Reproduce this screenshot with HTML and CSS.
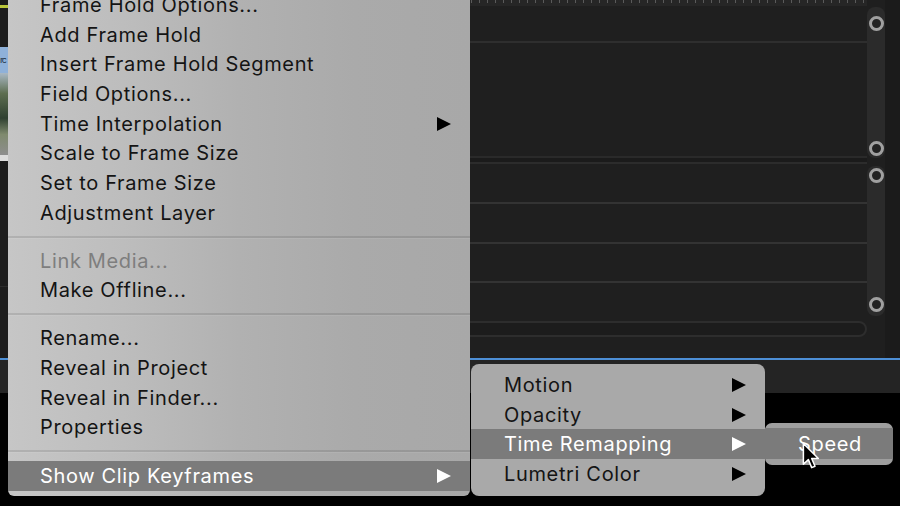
FILE: index.html
```html
<!DOCTYPE html>
<html>
<head>
<meta charset="utf-8">
<link rel="stylesheet" href="styles.css">
</head>
<body>
<div class="screen">
  <div class="timeline">
    <div class="strip">
      <div class="strip-yellow"></div>
      <div class="strip-gap1"></div>
      <div class="strip-clip">rc</div>
      <div class="strip-thumb"></div>
      <div class="strip-light"></div>
      <div class="strip-rest"></div>
    </div>
    <div class="tracks">
      <div class="ticks"></div>
      <div class="track t1"></div>
      <div class="track t2"></div>
      <div class="divider"></div>
      <div class="track t3"></div>
      <div class="track t4"></div>
      <div class="track t5"></div>
      <div class="track t6"></div>
      <div class="hscroll"></div>
      <div class="filler"></div>
    </div>
    <div class="vscroll">
      <div class="vtrack v1"><span class="knob"></span><span class="knob"></span></div>
      <div class="vtrack v2"><span class="knob"></span><span class="knob"></span></div>
    </div>
    <div class="edge"></div>
  </div>
  <div class="blue-line"></div>
  <div class="bottom-bar"></div>
  <div class="black"></div>

  <div class="menu main-menu">
    <div class="item">Frame Hold Options...</div>
    <div class="item">Add Frame Hold</div>
    <div class="item">Insert Frame Hold Segment</div>
    <div class="item">Field Options...</div>
    <div class="item has-sub">Time Interpolation<span class="arrow"></span></div>
    <div class="item">Scale to Frame Size</div>
    <div class="item">Set to Frame Size</div>
    <div class="item">Adjustment Layer</div>
    <div class="sep"></div>
    <div class="item disabled">Link Media...</div>
    <div class="item">Make Offline...</div>
    <div class="sep"></div>
    <div class="item">Rename...</div>
    <div class="item">Reveal in Project</div>
    <div class="item">Reveal in Finder...</div>
    <div class="item">Properties</div>
    <div class="sep"></div>
    <div class="item has-sub active">Show Clip Keyframes<span class="arrow"></span></div>
  </div>

  <div class="menu sub-menu">
    <div class="item has-sub">Motion<span class="arrow"></span></div>
    <div class="item has-sub">Opacity<span class="arrow"></span></div>
    <div class="item has-sub active">Time Remapping<span class="arrow"></span></div>
    <div class="item has-sub">Lumetri Color<span class="arrow"></span></div>
  </div>

  <div class="menu sub-menu2">
    <div class="item active">Speed</div>
  </div>

  <svg class="cursor" width="18" height="28" viewBox="0 0 13 20">
    <path d="M1 1 L1 16 L4.6 12.6 L7 18.4 L9.4 17.4 L7 11.8 L11.8 11.8 Z" fill="#000" stroke="#fff" stroke-width="1.1" stroke-linejoin="round"/>
  </svg>
</div>
</body>
</html>
```
FILE: styles.css
```css
* { box-sizing: border-box; }
html, body { margin: 0; padding: 0; }
body {
  width: 900px;
  height: 506px;
  overflow: hidden;
  background: #000;
  font-family: Inter, "Noto Sans", "Liberation Sans", sans-serif;
}
.screen {
  position: relative;
  width: 900px;
  height: 506px;
  display: flex;
  flex-direction: column;
}
.timeline {
  height: 358px;
  display: flex;
  background: #1f1f1f;
}
.strip {
  width: 8px;
  display: flex;
  flex-direction: column;
  background: #1b1b1b;
}
.strip-yellow { height: 10px; border-top: 5px solid #1b1b1b; background: #b9c53a; border-bottom: 2px solid #1b1b1b; }
.strip-gap1 { height: 37px; background: #1c1c1c; }
.strip-clip {
  height: 26px;
  background: #8fb1d9;
  color: #234;
  font-size: 9px;
  letter-spacing: -1.5px;
  line-height: 26px;
  overflow: hidden;
}
.strip-thumb {
  height: 82px;
  background: linear-gradient(#a9b8c4 0%, #5d6e50 25%, #2f4030 55%, #7f8a6e 75%, #8e8e8e 100%);
}
.strip-light { height: 6px; background: #dcdcdc; }
.strip-rest {
  flex: 1;
  background: #1c1c1c;
  border-top: 125px solid #1c1c1c;
  box-shadow: inset 0 1px 0 #2b2b2b;
}
.tracks {
  width: 859px;
  display: flex;
  flex-direction: column;
}
.ticks {
  height: 6px;
  background:
    repeating-linear-gradient(to right, transparent 0 7px, #5a5a5a 7px 8px) top / 100% 3px no-repeat,
    #262626;
}
.track { border-bottom: 2px solid #2e2e2e; }
.t1 { height: 37px; }
.t2 { height: 115px; border-bottom: 2px solid #2a2a2a; }
.divider { height: 6px; background: #1b1b1b; border-bottom: 2px solid #2c2c2c; }
.t3 { height: 40px; border-bottom-color: #333; }
.t4 { height: 40px; border-bottom-color: #333; }
.t5 { height: 39px; border-bottom-color: #333; }
.t6 { height: 38px; border-bottom: none; }
.hscroll {
  height: 16px;
  border: 2px solid #2d2d2d;
  border-radius: 8px;
  background: #1c1c1c;
}
.filler { flex: 1; }
.vscroll {
  width: 18px;
  display: flex;
  flex-direction: column;
  padding-top: 7px;
}
.vtrack {
  background: #2b2b2b;
  border-radius: 8px;
  display: flex;
  flex-direction: column;
  justify-content: space-between;
  align-items: center;
  padding: 9px 0 2px;
}
.v1 { height: 151px; }
.v2 { height: 150px; margin-top: 8px; padding-top: 2px; padding-bottom: 4px; }
.knob {
  width: 15px;
  height: 15px;
  border-radius: 50%;
  border: 3px solid #a0a0a0;
  background: #222;
}
.edge { flex: 1; background: #1b1b1b; }
.blue-line { height: 2px; background: #4d8fd6; }
.bottom-bar { height: 33px; background: #242424; }
.black { flex: 1; background: #000; }

/* menus */
.menu {
  position: absolute;
  display: flex;
  flex-direction: column;
  color: #141414;
  font-size: 20px;
  letter-spacing: 0.65px;
}
.item {
  height: 29.7px;
  display: flex;
  align-items: center;
  justify-content: space-between;
  white-space: nowrap;
}
.item.disabled { color: #7e7e7e; }
.item.active { background: #7b7b7b; color: #fff; }
.arrow {
  width: 0;
  height: 0;
  border-top: 7.5px solid transparent;
  border-bottom: 7.5px solid transparent;
  border-left: 14px solid #000;
}
.item.active .arrow { border-left-color: #fff; }

.main-menu {
  left: 8px;
  top: -15px;
  width: 462px;
  padding: 5px 0 5px;
  border-radius: 0 0 6px 6px;
  background: linear-gradient(to right, #c6c6c6 0%, #bdbdbd 25%, #b1b1b1 50%, #aaaaaa 75%, #a8a8a8 100%);
}
.main-menu .item { padding: 0 19px 0 32px; }
.sep {
  height: 18.3px;
  display: flex;
  align-items: center;
}
.sep::before {
  content: "";
  display: block;
  width: 100%;
  height: 2px;
  background: rgba(0, 0, 0, 0.1);
  box-shadow: 0 1px 0 rgba(255, 255, 255, 0.08);
}
.main-menu .item.active { height: 30px; }

.sub-menu {
  left: 471px;
  top: 364px;
  width: 294px;
  padding: 6px 0 7px;
  border-radius: 8px;
  background: #a9a9a9;
}
.sub-menu .item { padding: 0 19px 0 33px; }

.sub-menu2 {
  left: 765px;
  top: 423px;
  width: 128px;
  height: 42px;
  padding: 5px 0 6px;
  border-radius: 7px;
  background: #9e9e9e;
}
.sub-menu2 .item { height: 31px; padding-left: 33px; }

.cursor {
  position: absolute;
  left: 802px;
  top: 442px;
}
```
